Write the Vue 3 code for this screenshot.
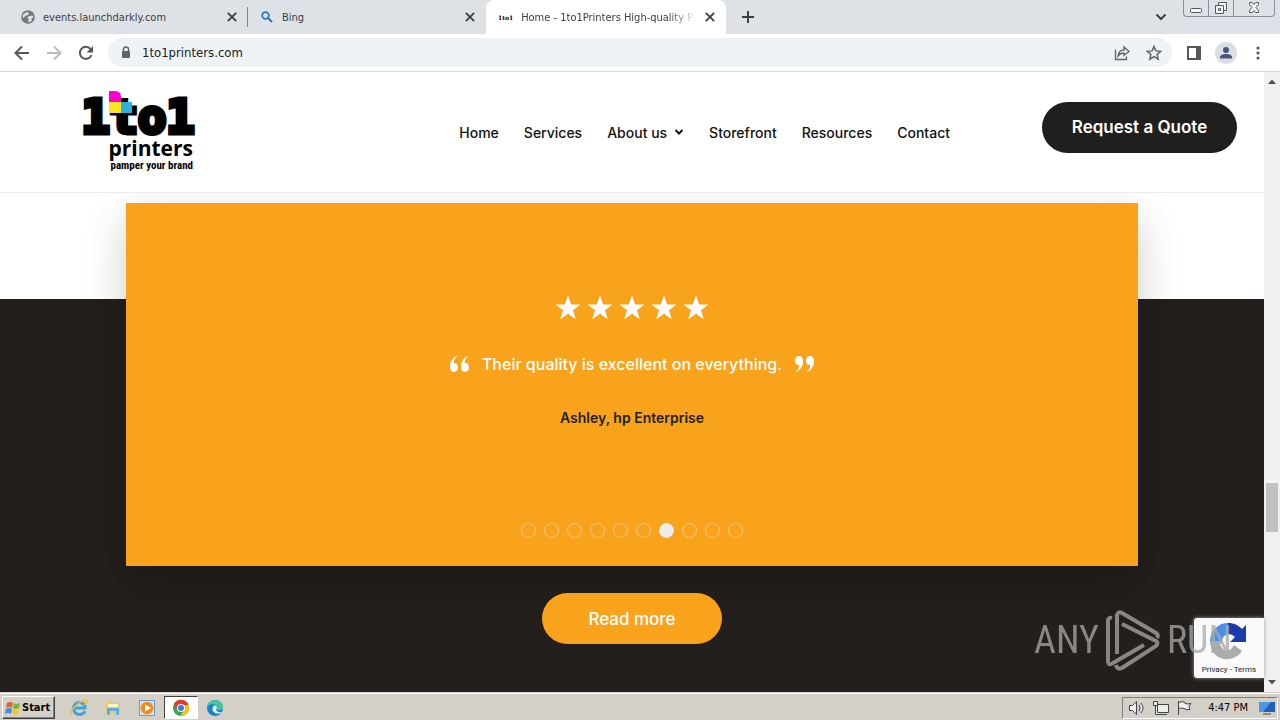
<script setup>
import { ref } from 'vue'

const address = ref('1to1printers.com')
const links = ['Home', 'Services', 'About us', 'Storefront', 'Resources', 'Contact']
const slides = 10
const active = ref(7)
</script>

<template>
  <div class="screen">
    <div class="tabstrip">
      <div class="tab first">
        <svg class="fav" viewBox="0 0 14 14"><circle cx="7" cy="7" r="6.8" fill="#73777c" /><path d="M2 4.500 6 2l2 1-1 2-3 1-1 2-1.500-1zM8.500 6l3-.5 1 2-2 1 .5 2-3 2-1-2 1-1.500-2-1.500z" fill="#dee1e6" /></svg>
        <button class="label">events.launchdarkly.com</button>
        <button class="close" aria-label="Close tab"><svg viewBox="0 0 10 10"><path d="M1.500 1.500l7 7m0-7l-7 7" /></svg></button>
      </div>
      <div class="tab second">
        <svg class="fav" viewBox="0 0 14 14"><circle cx="5.500" cy="5.500" r="3.300" fill="none" stroke="#3079bd" stroke-width="1.800" /><path d="M8 8l4 4" stroke="#3079bd" stroke-width="2.200" /></svg>
        <button class="label">Bing</button>
        <button class="close" aria-label="Close tab"><svg viewBox="0 0 10 10"><path d="M1.500 1.500l7 7m0-7l-7 7" /></svg></button>
      </div>
      <div class="tab current">
        <span class="mini">1to1</span>
        <button class="label">Home - 1to1Printers High-quality Printing</button>
        <button class="close" aria-label="Close tab"><svg viewBox="0 0 10 10"><path d="M1.500 1.500l7 7m0-7l-7 7" /></svg></button>
      </div>
      <button class="new" aria-label="New tab"><svg viewBox="0 0 12 12"><path d="M6 0v12M0 6h12" /></svg></button>
      <button class="search" aria-label="Search tabs"><svg viewBox="0 0 12 8"><path d="M1.500 1.500L6 6l4.500-4.500" /></svg></button>
      <div class="window">
        <button aria-label="Minimize"><svg viewBox="0 0 24 16"><rect x="6.500" y="8.500" width="11" height="4" rx="1" /></svg></button>
        <button aria-label="Restore"><svg viewBox="0 0 24 16"><path d="M9.500 5.500v-3h8v8h-3M6.500 5.500h8v8h-8zM9.500 8.500h2v2h-2z" /></svg></button>
        <button class="wide" aria-label="Close"><svg viewBox="0 0 24 16"><path d="M7.500 2.500h3l1.500 2 1.500-2h3v2l-2.500 3 2.500 3v2h-3l-1.500-2-1.500 2h-3v-2l2.500-3-2.500-3z" /></svg></button>
      </div>
    </div>

    <div class="toolbar">
      <button class="tool" aria-label="Back"><svg viewBox="0 0 16 16"><path d="M15 8H2M8 1.500L1.500 8 8 14.500" fill="none" stroke="#55585c" stroke-width="2" /></svg></button>
      <button class="tool" aria-label="Forward"><svg viewBox="0 0 16 16"><path d="M1 8h13M8 1.500L14.500 8 8 14.500" fill="none" stroke="#babcbe" stroke-width="2" /></svg></button>
      <button class="tool" aria-label="Reload"><svg viewBox="0 0 16 16"><path d="M13.500 10A6 6 0 1 1 12.500 4L14 5.500" fill="none" stroke="#55585c" stroke-width="2" /><path d="M15 1v6.500H8.500z" fill="#55585c" /></svg></button>
      <div class="omnibox">
        <svg class="lock" viewBox="0 0 10 12"><path d="M2.500 5V3a2.500 2.500 0 0 1 5 0v2" fill="none" stroke="#5f6368" stroke-width="1.500" /><rect x="1" y="4.500" width="8" height="7" rx="1" fill="#5f6368" /></svg>
        <input v-model="address" aria-label="Address" />
        <button class="tool" aria-label="Share"><svg viewBox="0 0 16 16"><path d="M1.500 4.500v10h11v-3M4 11c.5-4 3-6 6-6V2l5 4.500-5 4V8C7 8 5.500 9 4 11z" fill="none" stroke="#5f6368" stroke-width="1.300" /></svg></button>
        <button class="tool" aria-label="Bookmark"><svg viewBox="0 0 16 16"><path d="M8 1.500l1.900 4.400 4.800.4-3.600 3.100 1.100 4.700L8 11.600l-4.200 2.500 1.100-4.700-3.600-3.100 4.800-.4z" fill="none" stroke="#5f6368" stroke-width="1.500" /></svg></button>
      </div>
      <button class="tool" aria-label="Side panel"><svg viewBox="0 0 16 16"><path d="M1 1h14v14H1zM3 3v10h7V3z" fill="#55585c" fill-rule="evenodd" /></svg></button>
      <button class="tool" aria-label="Profile"><svg class="avatar" viewBox="0 0 22 22"><circle cx="11" cy="11" r="11" fill="#dadfe5" /><circle cx="11" cy="8" r="3" fill="#4b5875" /><path d="M5 16.500v-1.500c0-4 12-4 12 0v1.500z" fill="#4b5875" /></svg></button>
      <button class="tool" aria-label="Menu"><svg viewBox="0 0 16 16" fill="#55585c"><circle cx="8" cy="3" r="1.600" /><circle cx="8" cy="8" r="1.600" /><circle cx="8" cy="13" r="1.600" /></svg></button>
    </div>

    <div class="viewport">
      <div class="page">
        <header>
          <a href="#" class="logo" aria-label="1to1 printers">
            <svg viewBox="0 0 112 84">
              <text class="big" x="56" y="43" text-anchor="middle">1to1</text>
              <path d="M27 1h6q6 0 6 6v5H27z" fill="#f0c" />
              <path d="M27 12h12v11H27z" fill="#fce51c" />
              <path d="M39 12h11v11H39z" fill="#2bb0dd" />
              <text class="name" x="111" y="66" text-anchor="end">printers</text>
              <text class="tag" x="111" y="79" text-anchor="end">pamper your brand</text>
            </svg>
          </a>
          <nav>
            <a v-for="link in links" :key="link" href="#">{{ link }}<svg v-if="link === 'About us'" viewBox="0 0 10 8"><path d="M1.500 2L5 5.500 8.500 2" /></svg></a>
          </nav>
          <a href="#" class="pill dark">Request a Quote</a>
        </header>
        <main>
          <section class="card">
            <div class="stars" role="img" aria-label="5 out of 5">
              <svg v-for="n in 5" :key="n" viewBox="0 0 26 26"><path d="M13 0.500l3.200 8.900h9.300l-7.500 5.800 2.700 9L13 18.800l-7.700 5.400 2.700-9L.5 9.400h9.300z" /></svg>
            </div>
            <blockquote>
              <svg viewBox="0 0 20 18"><path d="M8 0.500C5 2.500 3.800 5 3.800 8c2.700-.2 4.200 1.500 4.200 4.300C8 15 6.500 17 4.200 17 1.500 17 0 14.800 0 11.500 0 6.500 3 2 8 .5z" /><path d="M19 0.500c-3 2-4.200 4.500-4.200 7.500 2.700-.2 4.200 1.500 4.200 4.300 0 2.700-1.500 4.700-3.800 4.700-2.700 0-4.200-2.200-4.200-5.500 0-5 3-9.500 8-11z" /></svg>
              <p>Their quality is excellent on everything.</p>
              <svg class="end" viewBox="0 0 20 18"><path d="M8 0.500C5 2.500 3.800 5 3.800 8c2.700-.2 4.200 1.500 4.200 4.300C8 15 6.500 17 4.200 17 1.500 17 0 14.800 0 11.500 0 6.500 3 2 8 .5z" /><path d="M19 0.500c-3 2-4.200 4.500-4.200 7.500 2.700-.2 4.200 1.500 4.200 4.300 0 2.700-1.500 4.700-3.800 4.700-2.700 0-4.200-2.200-4.200-5.500 0-5 3-9.500 8-11z" /></svg>
            </blockquote>
            <p class="author">Ashley, hp Enterprise</p>
            <div class="dots">
              <button v-for="n in slides" :key="n" :class="{ on: n === active }" :aria-label="`Slide ${n}`" @click="active = n"></button>
            </div>
          </section>
          <a href="#" class="pill more">Read more</a>
        </main>
        <div class="badge">
          <svg viewBox="0 0 40 40">
            <path d="M1 19A18 18 0 0 1 19 1v11a8 8 0 0 0-6 7z" fill="#4a90e8" />
            <path d="M19 1c6 0 10 2 14 6l4-4v17H21l5-5c-2-2-4-3-7-3z" fill="#1c3aa9" />
            <path d="M1 19h13l-3 3c3 9 11 8 14 1l8 6C24 42 2 40 1 19z" fill="#ababab" />
          </svg>
          <div><a href="#">Privacy</a> - <a href="#">Terms</a></div>
        </div>
      </div>
      <div class="scrollbar">
        <svg viewBox="0 0 16 16"><path d="M4 11h8L8 6.500z" /></svg>
        <div class="track"><div class="thumb"></div></div>
        <svg viewBox="0 0 16 16"><path d="M4 5h8L8 9.500z" /></svg>
      </div>
      <div class="watermark">
        <span>ANY</span>
        <svg viewBox="0 0 54 61"><path d="M6 8Q2 7 2 11V52Q3 56 7 53L38 35M11 44V5Q12 1 16 3L50 23Q53 25 51 28M16 14L50 31Q53 33 50 36L16 58Q11 60 10 55" /></svg>
        <span>RUN</span>
      </div>
    </div>

    <div class="taskbar">
      <button class="start">
        <svg viewBox="0 0 16 16"><path d="M2 3q3-2 6 0L7 8Q4 6 1 8z" fill="#e5622b" /><path d="M9 3q3 2 6 0l-1 5q-3 2-6 0z" fill="#78b63c" /><path d="M1 9q3-2 6 0l-1 5q-3-2-6 0z" fill="#3f8ed8" /><path d="M8 9q3 2 6 0l-1 5q-3 2-6 0z" fill="#f4c430" /></svg>Start
      </button>
      <div class="apps">
        <button aria-label="Internet Explorer"><svg viewBox="0 0 18 18"><path d="M15 12a6 6 0 1 1 0-5v2H5" fill="none" stroke="#39a4dd" stroke-width="3" /><path d="M1 16C-1 12 10 1 16 1c2 1 0 4-2 5" fill="none" stroke="#e7bd4a" stroke-width="1.500" /></svg></button>
        <button aria-label="Explorer"><svg viewBox="0 0 18 18"><path d="M2 2h6l1 2h7v10H2z" fill="#e9cb66" /><path d="M4 5h10v3H4z" fill="#fff5c0" /><path d="M3 9h12v7h-3v-4H6v4H3z" fill="#62aed8" /></svg></button>
        <button aria-label="Media Player"><svg viewBox="0 0 18 18"><rect x="1.500" y="1.500" width="15" height="15" fill="#d5e3ee" stroke="#6b9bc4" /><circle cx="9" cy="9" r="6.300" fill="#f28a1c" /><path d="M7 5.500l6 3.500-6 3.500z" fill="#fff" /></svg></button>
        <button class="open" aria-label="Chrome"><svg viewBox="0 0 18 18"><circle cx="9" cy="9" r="8" fill="#35a852" /><path d="M2 5a8 8 0 0 1 14.500 1H9l-3.500 5z" fill="#e33b2e" /><path d="M9 6h7.500A8 8 0 0 1 8.500 17L12 11z" fill="#fbc116" /><circle cx="9" cy="9" r="4" fill="#fff" /><circle cx="9" cy="9" r="3" fill="#3b78e7" /></svg></button>
        <button aria-label="Edge"><svg viewBox="0 0 18 18"><circle cx="9" cy="9" r="8" fill="#1683d1" /><path d="M1 9C1 -1 17-1 17 8c0 4-6 4-6 2 0-6-8-6-10-1z" fill="#48c3a0" /><path d="M7 8c-2 4 2 8 8 6l1-1c-5 1-7-2-5-4-1-3-3-3-4-1z" fill="#e8f5f5" /></svg></button>
      </div>
      <div class="tray">
        <svg viewBox="0 0 18 16"><path d="M1.500 5.500h3l4-4v13l-4-4h-3zM11 5q2 3 0 6M13 3q4 5 0 10" /></svg>
        <svg viewBox="0 0 18 16"><path d="M5.500 4.500h11v8h-11zM8 14.500h7M3.500 6v8.500H8M1.500 1.500h4v4h-4z" /></svg>
        <svg viewBox="0 0 18 16"><path d="M2.500 1v14M3 2.500q3-2 6 0v1q3 1 6 0l-2 3 1 3q-3 1-6-1-2-1-5 0" /></svg>
        <time>4:47 PM</time>
        <svg viewBox="0 0 18 16"><path d="M1 2h16v10H1z" fill="#1e62b8" stroke="none" /><path d="M1 2h12L5 12H1z" fill="#4d97e0" stroke="none" /><path d="M5 14h8" /></svg>
      </div>
    </div>
  </div>
</template>

<style>
body { margin: 0; }
</style>

<style scoped>
* { box-sizing: border-box; }
.screen { display: flex; flex-direction: column; min-height: 100vh; font-family: "DejaVu Sans Condensed", "DejaVu Sans", sans-serif; overflow: hidden; }
button { font: inherit; color: inherit; background: none; border: 0; padding: 0; }
svg { display: block; flex: none; }
a { color: inherit; text-decoration: none; }

.tabstrip { display: flex; align-items: center; height: 34px; background: #dee1e6; font-size: 11px; color: #3c4043; }
.tab { display: flex; align-items: center; align-self: stretch; gap: 8px; flex: 0 1 240px; min-width: 0; padding: 0 10px 0 12px; }
.first { flex-basis: 248px; padding-left: 21px; background: linear-gradient(#80868b, #80868b) right center / 1px 20px no-repeat; }
.second { flex-basis: 238px; }
.current { background: #fff; border-radius: 8px 8px 0 0; }
.label { flex: 1; min-width: 0; overflow: hidden; white-space: nowrap; text-align: left; }
.current .label { mask-image: linear-gradient(90deg, #000 85%, transparent); }
.fav { width: 14px; height: 14px; }
.mini { font: 700 6px "DejaVu Serif", serif; color: #000; }
.close svg { width: 12px; height: 12px; fill: none; stroke: #3c4043; stroke-width: 1.500; }
.new { margin-left: 16px; }
.new svg { width: 12px; height: 12px; stroke: #3c4043; stroke-width: 2; }
.search { margin-left: auto; margin-right: 16px; }
.search svg { width: 12px; height: 8px; fill: none; stroke: #3c4043; stroke-width: 2; }
.window { display: flex; align-self: flex-start; height: 17px; margin-right: 5px; border: 1px solid #8b8e94; border-top: 0; border-radius: 0 0 4px 4px; }
.window button { width: 25px; display: grid; place-items: center; border-right: 1px solid #8b8e94; }
.window .wide { width: 40px; border-right: 0; }
.window svg { width: 24px; height: 16px; fill: #f4f5f7; stroke: #55585d; }

.toolbar { display: flex; align-items: center; height: 38px; padding: 0 6px; background: #fff; border-bottom: 1px solid #d5d6d8; }
.tool { width: 32px; height: 29px; display: grid; place-items: center; flex: none; }
.tool svg { width: 16px; height: 16px; }
.tool .avatar { width: 22px; height: 22px; }
.omnibox { flex: 1; display: flex; align-items: center; height: 29px; margin: 0 6px; padding: 0 2px 0 13px; background: #eff2f5; border-radius: 15px; }
.lock { width: 10px; height: 13px; }
.omnibox input { flex: 1; min-width: 0; margin-left: 11px; padding: 0; border: 0; background: none; outline: 0; font: 13px "DejaVu Sans Condensed", sans-serif; color: #202124; }

.viewport { position: relative; flex: 1; display: flex; }
.page { position: relative; flex: 1; display: flex; flex-direction: column; min-width: 0; font-family: Inter, sans-serif; }
header { position: relative; z-index: 1; display: flex; align-items: center; height: 121px; padding: 0 27px 0 82px; background: #fff; border-bottom: 1px solid #ececec; }
.logo svg { width: 112px; height: 84px; overflow: visible; }
.big { font: 700 47px "DejaVu Sans Mono", monospace; stroke: #000; stroke-width: 5; }
.name { font: 700 21px "Open Sans", sans-serif; }
.tag { font: 700 11px "Roboto Condensed", "Open Sans", sans-serif; }
nav { display: flex; gap: 25px; margin-left: auto; font-size: 14px; font-weight: 500; color: #111; white-space: nowrap; }
nav a { display: flex; align-items: center; }
nav svg { width: 10px; height: 8px; margin-left: 7px; fill: none; stroke: #111; stroke-width: 2; }
.pill { display: grid; place-items: center; height: 51px; border-radius: 26px; color: #fff; font-size: 17px; white-space: nowrap; }
.dark { min-width: 195px; margin-left: 92px; margin-bottom: 10px; background: #201f1f; font-weight: 600; }
main { flex: 1; display: flex; flex-direction: column; align-items: center; padding: 10px 0 48px; background: linear-gradient(#fff 106px, #231f1c 106px); }
.card { width: 80%; min-height: 363px; padding: 92px 20px 28px; display: flex; flex-direction: column; align-items: center; background: #f9a21b; box-shadow: 0 16px 40px rgba(0, 0, 0, .2); }
.stars { display: flex; gap: 6px; }
.stars svg { width: 26px; height: 26px; fill: #fff; }
blockquote { display: flex; align-items: center; gap: 12px; margin: 30px 0 0; fill: #fff; color: #fff; font-size: 16px; font-weight: 500; line-height: 26px; }
blockquote p { margin: 0; }
blockquote svg { width: 20px; height: 18px; }
.end { transform: rotate(180deg); }
.author { margin: 29px 0 0; font-size: 14px; line-height: 24px; font-weight: 600; color: #231f1c; }
.dots { display: flex; gap: 8px; margin-top: auto; }
.dots button { width: 15px; height: 15px; border: 1px solid #efcb8c; border-radius: 50%; }
.dots .on { background: #ececec; border-color: #ececec; }
.more { min-width: 180px; margin-top: 27px; background: #f9a21b; font-weight: 500; }
.badge { position: absolute; right: 0; bottom: 14px; width: 70px; height: 60px; padding-top: 4px; display: flex; flex-direction: column; align-items: center; gap: 3px; background: #f9f9f9; border-radius: 3px 0 0 3px; box-shadow: 0 0 4px #999; font: 8px Roboto, sans-serif; color: #222; white-space: nowrap; }
.badge svg { width: 40px; height: 40px; }

.scrollbar { width: 16px; display: flex; flex-direction: column; background: #f1f1f1; }
.scrollbar svg { width: 16px; height: 18px; fill: #505050; }
.track { flex: 1; display: flex; flex-direction: column; }
.track::before { content: ""; flex: 393; }
.track::after { content: ""; flex: 142; }
.thumb { flex: 49; margin: 0 2px; background: #c1c1c1; }
.watermark { position: absolute; right: 48px; bottom: 21px; display: flex; align-items: center; gap: 7px; color: #aaa; opacity: .75; font: 38px/62px "Roboto Condensed", "Liberation Sans Narrow", Roboto, sans-serif; pointer-events: none; }
.watermark svg { width: 54px; height: 61px; fill: none; stroke: #aaa; stroke-width: 4; }

.taskbar { display: flex; align-items: center; height: 28px; padding: 2px 2px 0; background: #d4d0c8; border-top: 1px solid #d4d0c8; box-shadow: inset 0 1px #fff; font-size: 11px; color: #000; }
.start { display: flex; align-items: center; gap: 1px; height: 23px; padding: 0 4px 0 2px; border: 1px solid; border-color: #fff #404040 #404040 #fff; box-shadow: inset -1px -1px #808080; font-weight: 700; }
.start svg { width: 16px; height: 16px; }
.apps { display: flex; margin-left: 7px; }
.apps button { width: 34px; height: 23px; display: grid; place-items: center; }
.apps .open { background: #fff; border: 1px solid; border-color: #404040 #fff #fff #404040; }
.apps svg { width: 18px; height: 18px; }
.tray { display: flex; align-items: center; gap: 6px; height: 22px; margin-left: auto; padding: 0 1px 0 5px; border: 1px solid; border-color: #808080 #fff #fff #808080; }
.tray svg { width: 18px; height: 16px; fill: #eee; stroke: #444; }
.tray time { margin: 0 4px 0 8px; white-space: nowrap; }
</style>
